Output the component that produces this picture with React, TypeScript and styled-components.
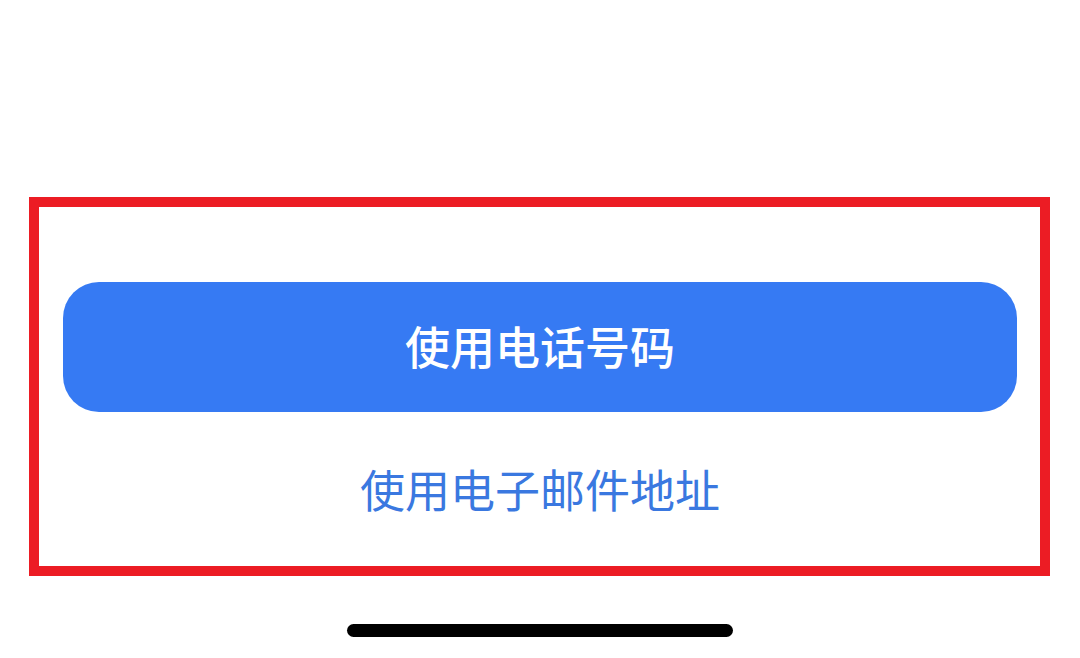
import React from "react";
import styled, { createGlobalStyle } from "styled-components";

const GlobalStyle = createGlobalStyle`
  html, body {
    margin: 0;
    padding: 0;
    background: #ffffff;
  }
  body {
    font-family: "Noto Sans CJK SC", "Noto Sans", sans-serif;
  }
`;

const Screen = styled.main`
  width: 1080px;
  height: 658px;
  display: flex;
  flex-direction: column;
  align-items: flex-start;
  padding: 197px 0 0 29px;
  box-sizing: border-box;
  overflow: hidden;
`;

// highlighted area round the two choices
const Frame = styled.section`
  width: 1021px;
  box-sizing: border-box;
  border: 10px solid #ec1c24;
  padding: 75px 23px 49px 24px;
  display: flex;
  flex-direction: column;
  align-items: stretch;
`;

const PrimaryButton = styled.button`
  height: 130px;
  border: none;
  border-radius: 36px;
  background: #367af3;
  color: #ffffff;
  font-family: inherit;
  font-size: 45px;
  font-weight: 500;
  display: flex;
  align-items: center;
  justify-content: center;
  padding: 0 0 4px;
  cursor: pointer;
`;

const TextLink = styled.button`
  margin-top: 49px;
  height: 56px;
  line-height: 56px;
  border: none;
  background: transparent;
  color: #3a78e0;
  font-family: inherit;
  font-size: 45px;
  font-weight: 400;
  padding: 0;
  cursor: pointer;
`;

const HomeIndicator = styled.div`
  margin-top: 48px;
  margin-left: 318px;
  width: 386px;
  height: 13px;
  border-radius: 7px;
  background: #000000;
`;

export default function App() {
  return (
    <>
      <GlobalStyle />
      <Screen>
        <Frame>
          <PrimaryButton>使用电话号码</PrimaryButton>
          <TextLink>使用电子邮件地址</TextLink>
        </Frame>
        <HomeIndicator />
      </Screen>
    </>
  );
}
